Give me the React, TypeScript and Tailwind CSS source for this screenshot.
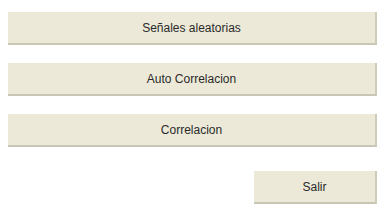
export default function App() {
  const btn =
    "h-[33px] bg-[#ece9d8] border-r-2 border-b-2 border-r-[#cfccbc] border-b-[#c9c6b6] text-[12px] text-[#2a2a2a] [font-family:'Liberation_Sans',Arial,sans-serif] flex items-center justify-center";
  return (
    <div className="w-[389px] h-[220px] bg-white pl-2 pr-3 pt-3 flex flex-col">
      <button className={btn}>Señales aleatorias</button>
      <button className={`${btn} mt-[18px]`}>Auto Correlacion</button>
      <button className={`${btn} mt-[18px]`}>Correlacion</button>
      <div className="flex justify-end mt-[24px]">
        <button className={`${btn} w-[123px] h-[32px]`}>Salir</button>
      </div>
    </div>
  );
}
